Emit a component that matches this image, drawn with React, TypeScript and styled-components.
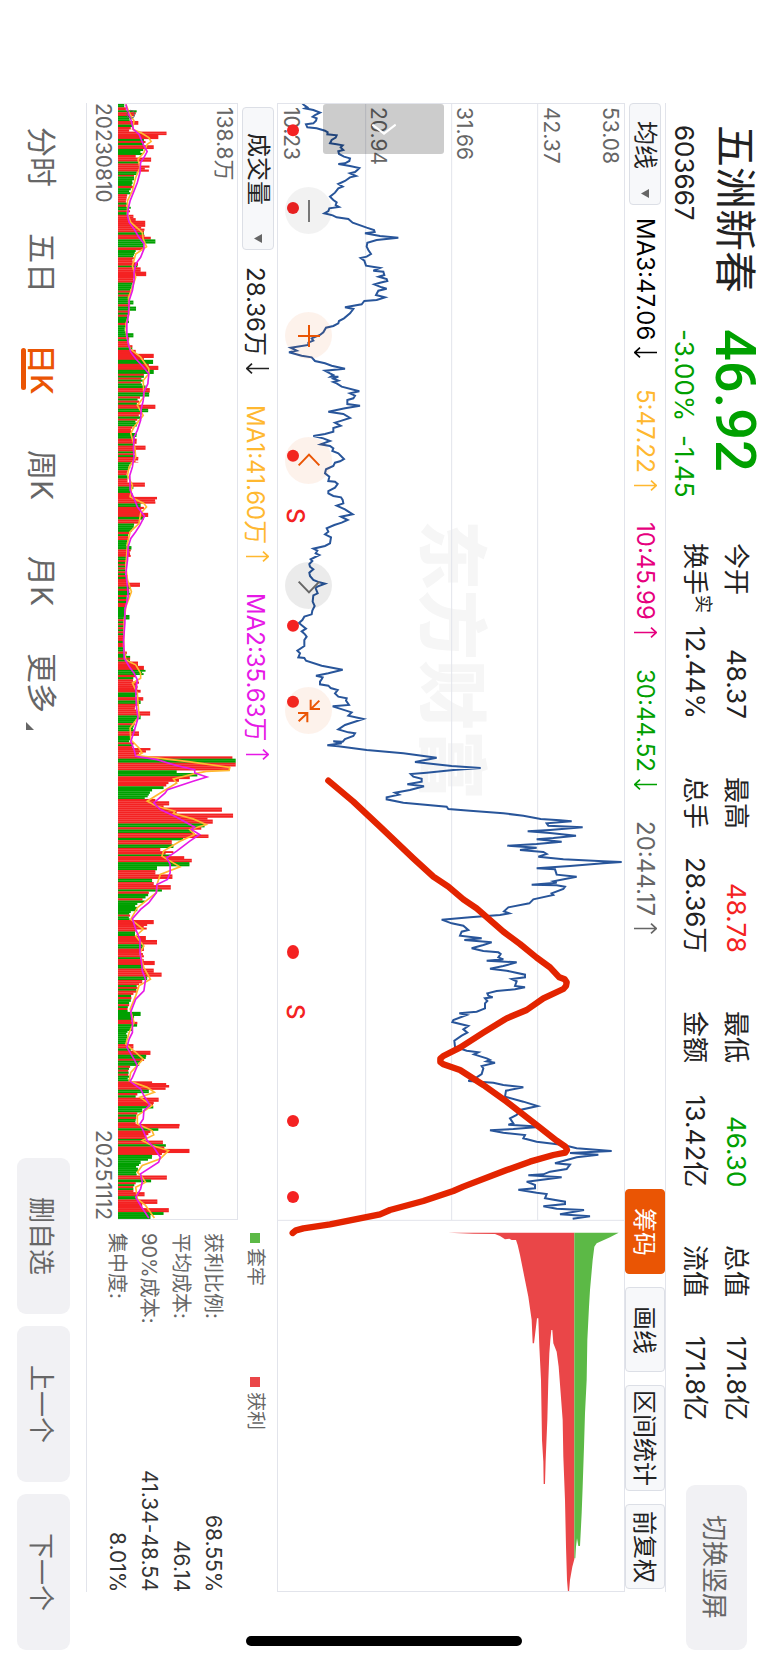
import React from "react";
import styled, { createGlobalStyle } from "styled-components";

const colors = {
  ink: "#222222",
  text: "#333333",
  muted: "#666666",
  line: "#e2e4eb",
  rise: "#f42222",
  fall: "#00a000",
  brand: "#ea5504",
  amber: "#ffb830",
  magenta: "#e619e6",
  pink: "#e6007e",
  price: "#28559a",
};

/* The whole screen is set sideways: the inline axis runs down, the block axis runs leftwards. */
const GlobalStyle = createGlobalStyle`
  * { box-sizing: border-box; }
  body {
    margin: 0;
    background: #fff;
    color: ${colors.ink};
    font-family: Inter, "Noto Sans CJK SC", sans-serif;
  }
  button, select { font: inherit; color: inherit; writing-mode: inherit; text-orientation: inherit; }
  svg { display: block; }
`;

const Screen = styled.main`
  position: relative;
  writing-mode: vertical-rl;
  text-orientation: sideways;
  display: flex;
  flex-direction: column;
  width: 100%;
  height: 100vh;
  white-space: nowrap;
`;

const Header = styled.header`
  display: flex;
  block-size: 102px;
  padding-inline: 125px 13px;
`;

const Quote = styled.section`
  display: grid;
  grid-template-columns: 204px 214px;
  grid-template-rows: 42px 32px;
  row-gap: 14px;
  padding-block-start: 12px;
  font-size: 26px;
  line-height: 32px;
`;

const Name = styled.h1`
  margin: 0;
  font-size: 42px;
  font-weight: 400;
  line-height: 42px;
`;

const Price = styled.strong`
  color: ${colors.fall};
  font-family: Roboto, sans-serif;
  font-size: 56px;
  font-weight: 500;
  line-height: 42px;
`;

const Change = styled.span`
  display: flex;
  gap: 14px;
  color: ${colors.fall};
`;

const Facts = styled.dl`
  display: grid;
  grid-template-columns: repeat(4, 176px);
  grid-template-rows: 40px 40px;
  column-gap: 58px;
  row-gap: 1px;
  margin: 0;
  padding-block-start: 12px;
  font-size: 26px;
  line-height: 40px;
`;

const Fact = styled.div`
  display: flex;
  justify-content: space-between;
`;

const Term = styled.dt`
  display: flex;
`;

const Value = styled.dd<{ $color?: string }>`
  margin: 0;
  color: ${(p) => p.$color ?? "inherit"};
`;

const Mark = styled.sup`
  font-size: 18px;
  line-height: 24px;
`;

const SoftButton = styled.button<{ $block: number; $inline: number }>`
  block-size: ${(p) => p.$block}px;
  inline-size: ${(p) => p.$inline}px;
  padding: 0;
  border: 0;
  border-radius: 9px;
  background: #f1f1f4;
  color: ${colors.muted};
  font-size: 26px;
`;

const RotateSlot = styled.div`
  margin-inline-start: auto;
  padding-block-start: 21px;
`;

const Workspace = styled.div`
  flex: 1;
  display: flex;
  flex-direction: column;
  min-block-size: 0;
  margin-inline: 103px 71px;
  border-block: 1px solid ${colors.line};
`;

const Toolbar = styled.div`
  display: flex;
  align-items: center;
  justify-content: space-between;
  block-size: 40px;
`;

const Indicators = styled.div`
  display: flex;
  align-items: center;
  gap: 31px;
  font-size: 24px;
`;

const Reading = styled.span<{ $color: string }>`
  display: flex;
  align-items: center;
  gap: 7px;
  color: ${(p) => p.$color};
`;

const PickerBox = styled.label<{ $inline: number; $pull: number }>`
  position: relative;
  inline-size: ${(p) => p.$inline}px;
  block-size: 32px;
  margin-inline-end: -${(p) => p.$pull}px;

  svg {
    position: absolute;
    inset-inline-end: 7px;
    inset-block-start: 12px;
    pointer-events: none;
  }
`;

const Picker = styled.select<{ $pad: number }>`
  appearance: none;
  inline-size: 100%;
  block-size: 100%;
  padding: 0;
  padding-inline-start: ${(p) => p.$pad}px;
  border: 1px solid #dcdfe6;
  border-radius: 4px;
  background: #f7f8fa;
  font-size: 24px;
  line-height: 30px;
`;

const Tools = styled.div`
  display: flex;
  gap: 13px;
  padding-inline-end: 3px;
`;

const Tool = styled.button<{ $wide?: boolean; $active?: boolean }>`
  block-size: 40px;
  inline-size: ${(p) => (p.$wide ? 106 : 85)}px;
  padding: 0;
  padding-block-end: 3px;
  border: 1px solid ${(p) => (p.$active ? colors.brand : "#dcdfe6")};
  border-radius: 4px;
  background: ${(p) => (p.$active ? colors.brand : "#f7f8fa")};
  color: ${(p) => (p.$active ? "#fff" : colors.ink)};
  font-size: 24px;
`;

const PriceChart = styled.section`
  position: relative;
  flex: 1;
  min-block-size: 0;
  border: 1px solid ${colors.line};
`;

const Watermark = styled.span`
  position: absolute;
  top: 28%;
  left: 40%;
  color: #f6f6f6;
  font-size: 70px;
  font-weight: 900;
  line-height: 70px;
`;

const AxisLabel = styled.span<{ $left: string }>`
  position: absolute;
  top: 3px;
  left: ${(p) => p.$left};
  color: ${colors.muted};
  font-size: 21px;
  line-height: 20px;
`;

const Plot = styled.svg`
  position: absolute;
  inset: 0;
  width: 100%;
  height: 100%;
  pointer-events: none;
`;

const Signal = styled.span<{ $top: string }>`
  position: absolute;
  top: ${(p) => p.$top};
  left: 7px;
  color: ${colors.rise};
  font-size: 24px;
  font-weight: 500;
  line-height: 20px;
`;

const Drawer = styled.button`
  position: absolute;
  top: 0;
  left: 13%;
  display: grid;
  place-items: center;
  width: 35%;
  height: 50px;
  padding: 0;
  border: 0;
  border-radius: 3px;
  background: rgba(0, 0, 0, 0.2);
  color: #fff;
`;

const Pad = styled.div`
  position: absolute;
  top: 83px;
  left: 7px;
  display: flex;
  gap: 78px;
`;

const PadButton = styled.button<{ $tone: string; $tint: string }>`
  display: grid;
  place-items: center;
  width: 47px;
  height: 47px;
  padding: 0;
  border: 0;
  border-radius: 50%;
  background: ${(p) => p.$tint};
  color: ${(p) => p.$tone};
`;

const Lower = styled.div`
  display: grid;
  grid-template-columns: 3fr 1fr;
  block-size: 190px;
`;

const VolumeArea = styled.section`
  display: flex;
  flex-direction: column;
`;

const VolumeBar = styled(Toolbar)`
  block-size: 39px;
  padding-inline-start: 4px;
`;

const VolumeFrame = styled.div`
  position: relative;
  flex: 1;
  border: solid ${colors.line};
  border-width: 1px 1px 1px 0;
`;

const Dates = styled.div`
  display: flex;
  justify-content: space-between;
  block-size: 31px;
  color: ${colors.muted};
  font-size: 21px;
  line-height: 29px;
`;

const ChipPanel = styled.aside`
  padding-inline-start: 13px;
  color: ${colors.muted};
`;

const Legend = styled.div`
  display: flex;
  block-size: 44px;
  margin-block-end: 4px;
  font-size: 19px;
  line-height: 44px;
`;

const LegendItem = styled.span<{ $color: string }>`
  display: flex;
  align-items: center;
  gap: 5px;
  inline-size: 144px;

  &::before {
    content: "";
    inline-size: 10px;
    block-size: 10px;
    background: ${(p) => p.$color};
  }
`;

const ChipList = styled.dl`
  margin: 0;
  font-size: 21px;
  line-height: 32px;

  dt {
    font-size: 20px;
  }
`;

const Footer = styled.footer`
  display: flex;
  justify-content: space-between;
  block-size: 86px;
  padding-inline: 104px 13px;
  padding-block: 16px 17px;
`;

const Tabs = styled.nav`
  display: flex;
`;

const Tab = styled.button<{ $active?: boolean; $more?: boolean }>`
  position: relative;
  inline-size: 106px;
  padding: 0;
  padding-inline-end: ${(p) => (p.$more ? 8 : 0)}px;
  border: 0;
  background: none;
  color: ${(p) => (p.$active ? colors.brand : colors.muted)};
  font-size: 30px;
  font-weight: ${(p) => (p.$active ? 500 : 400)};

  &::after {
    content: "";
    display: ${(p) => (p.$active ? "block" : "none")};
    position: absolute;
    inset-inline: 32px;
    inset-block-end: 4px;
    block-size: 5px;
    border-radius: 3px;
    background: currentColor;
  }

  svg {
    position: absolute;
    inset-inline-end: 10px;
    inset-block-end: 9px;
  }
`;

const Pager = styled.div`
  display: flex;
  gap: 12px;
`;

const HomeBar = styled.div`
  position: absolute;
  bottom: 17px;
  left: 32%;
  width: 36%;
  height: 10px;
  border-radius: 5px;
  background: #000;
`;

function Trend({ up }: { up?: boolean }) {
  return (
    <svg width="23" height="11" viewBox="0 0 23 11" fill="none" stroke="currentColor" strokeWidth="1.7" aria-hidden>
      <path d={up ? "M0 5.5H22M17 .7L22.2 5.5L17 10.3" : "M23 5.5H1M6 .7L.8 5.5L6 10.3"} />
    </svg>
  );
}

function Caret() {
  return (
    <svg width="8" height="9" viewBox="0 0 8 9" fill={colors.muted} aria-hidden>
      <path d="M0 4.5L8 0V9Z" />
    </svg>
  );
}

function Glyph({ d }: { d: string }) {
  return (
    <svg width="24" height="24" viewBox="-36 -36 72 72" fill="none" stroke="currentColor" strokeWidth="6" aria-hidden>
      <path d={d} />
    </svg>
  );
}

/* Traced series: each piece holds "x,y" pairs and is shifted down by its own offset. */
type Piece = [number, string];

const join = (pieces: Piece[]) =>
  pieces
    .map(([dy, pts]) =>
      pts
        .split(" ")
        .map((p) => {
          const [x, y] = p.split(",").map(Number);
          return `${x},${y + dy}`;
        })
        .join(" "),
    )
    .join(" ");

const closeLine = join([
  [0, "95,38 102,45 112,52 105,55 130,60 150,68 135,75 128,80 140,85 138,92 130,100 108,103 112,112 140,115 165,122 173,127 172,133 200,136 197,143 185,150 180,160 200,163 218,166 212,172 220,180 205,184 207,192 222,200 240,205 238,213 225,220 205,222 240,228 268,234 262,240 255,246 240,250 258,258 240,262 225,273 205,282 218,290 205,295 195,308 180,320 190,330 200,337 197,345 207,351 178,355 175,363 163,370 188,376 200,382 235,387 248,398 290,413 312,420 314,426 285,430 330,438 385,443 320,450 292,458 290,470 295,480 303,492 290,500 272,504 283,512 288,527 330,534 310,542 340,545 343,555 326,560 350,567 352,573 330,578 313,583 335,592 350,596 325,602 318,615 345,622 320,630 283,633 275,643 225,652 250,657 240,670 222,685 207,693 205,700 190,708 168,713 160,727 150,735 125,745 130,752 115,758 115,765 62,773 80,782 57,787 95,797 125,802 135,813 165,820 185,827 225,836 165,842 180,850 190,855 182,860 205,860 190,866 205,872 190,876 200,880 215,890 268,904 240,910 255,917 250,925 232,930 232,942 270,947 225,955 175,965 220,972 240,984 215,992"],
  [990, "195,8 212,17 190,24 190,35 165,42 130,48 160,55 180,63 152,73 180,78 190,85 187,93 205,100 222,117 210,124 195,128 190,138 168,148 165,160 178,170 175,183 195,185 203,192 195,203 175,213 175,220 190,228 213,232 218,240 220,250 200,257 225,268 248,283 213,290 233,300 215,308 193,315 170,325 175,335 165,343 183,352 180,370 165,378 130,386 142,392 137,400 148,405 122,418 127,423 118,432 120,440 130,448 118,458 120,468 130,480 148,487 165,491 142,500 137,505 143,520 130,526 128,545 134,558 127,572 125,583 103,590 97,600 87,609 97,617 108,626 95,634 105,643 110,650 103,660 103,678 82,692 90,700 85,712 103,714 108,722 155,737 218,749 175,760 138,767 158,772 155,778 150,785 150,793 175,797 182,804 203,810 195,820 205,830 230,835 228,842 237,855 188,859 245,877 235,887 280,897 225,915 205,928 235,937 255,940 250,948 225,957 218,965 190,964 215,970 172,976 205,979 290,990 400,1000 500,1013"],
  [1980, "435,36 545,48 632,54 550,60 470,68 422,72 430,80 455,86 455,95 412,103 462,109 420,120 375,128 387,134 350,142 350,148 400,158 530,170 535,177 600,182 700,190 760,197 812,207 870,211 905,214 830,220 835,227 938,232 840,240 773,244 840,249 918,257 850,264 800,268 875,275 800,282 712,287 800,293 750,300 820,306 830,312 805,320 880,328 1000,334 1055,336 1000,340 900,348 800,355 855,358 860,374 920,380 850,394 860,398 785,404 860,406 885,410 880,417 845,430 850,435 790,448 778,460 715,472 702,484 718,490 690,495 600,502 515,509 545,520 580,527 595,540 575,545 570,557 635,565 583,570 665,577 640,585 605,595 640,603 685,607 692,612 685,622 700,628 650,632 740,637 700,648 660,656 710,662 765,674 765,682 725,687 740,694 735,708 765,712 735,718 680,723 652,730 655,737 668,742 645,745"],
  [2730, "652,3 645,10 645,25 620,35 568,40 590,45 550,60 547,66 595,78 580,88 592,98 575,107 553,122 555,140 590,152 625,157 612,163 650,175 660,180 650,184 675,188 635,198 640,205 635,222 620,232 595,243 670,248 700,255 760,262 708,272 705,290 760,305 803,318 750,330 740,345 720,355 730,370 715,374 815,380 730,387 660,391 700,398 765,405 760,415 800,425 880,435 920,445 1025,453 900,459 985,464 920,472 855,490 900,494 890,507 840,515 820,523 775,526 875,532 770,545 795,555 795,565 745,569 800,578 830,582 825,595 885,605 885,612 820,619 860,626 942,630 870,643 960,649 908,656"],
]);

const sketchLine = join([
  [1980, "175,92 250,155 330,230 430,325 490,380 535,410 580,448 620,475 700,545 750,582 800,623 840,652 868,682 884,688 890,697 888,708 880,717 820,745"],
  [2730, "770,30 710,55 640,98 570,143 520,168 511,176 511,186 520,193 570,210 640,255 710,305 800,375 860,422 886,440 891,450 886,458 850,465 780,485 710,510 580,560 550,573 460,603 360,630 330,643 180,673 100,685 78,691 68,699"],
]);

const amberLine = join([
  [0, "135,40 145,65 160,90 155,115 180,125 205,140 212,152 200,160 190,185 172,205 178,230 165,260 155,300 140,330 140,370 150,395 185,425 188,445 198,468 165,490 155,525 165,560 155,590 143,620 145,670 135,700 137,735 148,775 180,800 205,835 205,850 188,870 190,920 170,945 188,975 160,1010 150,1030 162,1070 165,1100"],
  [1110, "160,0 145,20 140,45 155,75 148,110 190,130 198,140 180,160 175,190 148,215 140,250 135,320 140,360 152,395 135,440 130,480 128,560 135,600 165,615 180,640 180,655 155,670 170,700 175,770 148,805 150,840 175,865 185,880 170,888 320,905 452,923 450,932 380,935 345,942 280,958 290,970 240,1000 200,1025 230,1040 285,1055 280,1062 340,1078 380,1095"],
  [2220, "330,0 345,15 300,35 250,65 245,80 300,112 240,135 230,165 228,190 170,235 150,270 188,300 165,320 190,350 178,370 190,415 210,450 175,470 165,500 148,540 160,580 145,610 135,645 165,670 188,690 150,730 145,755 200,775 222,790 178,805 215,830 170,860 170,885 215,905 220,918 185,935 215,950 265,965 240,990 185,1010 170,1030 185,1045 195,1060 165,1075 170,1110 195,1130 222,1168"],
]);

const magentaLine = join([
  [0, "135,40 140,60 150,85 158,115 175,130 190,165 200,182 190,200 180,215 178,245 170,275 160,300 148,330 142,355 140,375 145,395 160,415 175,440 190,458 190,475 180,500 165,520 160,545 160,570 155,600 145,630 143,670 138,700 138,730 142,760 150,785 165,805 190,832 205,850 202,880 190,905 188,930 182,955 180,990 170,1020 160,1040 158,1075 160,1100"],
  [1110, "158,0 155,20 147,45 148,90 160,115 170,140 192,168 178,195 165,215 150,235 142,260 140,300 135,340 140,380 142,410 132,450 132,490 128,540 130,595 145,620 160,640 170,660 165,690 167,740 172,775 160,815 150,845 160,870 165,890 230,900 290,918 345,930 345,940 382,952 340,965 262,990 255,1000 220,1030 240,1050 290,1073 345,1103"],
  [2220, "335,0 360,15 330,35 290,65 260,85 270,105 270,130 262,150 230,165 228,190 205,220 180,240 155,268 165,300 178,330 178,370 183,400 185,425 195,450 190,485 165,510 150,548 155,580 155,610 145,630 138,655 160,690 170,710 155,745 148,757 180,780 190,800 208,828 190,845 188,870 178,885 190,910 200,935 220,955 240,985 235,1000 180,1035 185,1060 180,1080 165,1105 180,1130 205,1168"],
]);

/* Volume runs as "end,reach,kind": R rising, G falling, M mixed days. */
const volumeRuns: Piece[] = [
  [0, "49,130,G 58,135,R 75,168,R 90,150,G 101,173,R 108,155,G 122,150,R 132,259,R 144,234,R 150,190,G 156,195,R 163,190,G 174,220,R 192,188,G 200,165,R 212,212,R 218,175,G 224,180,R 242,207,R 252,168,G 262,160,M 285,160,G 292,158,R 310,150,G 348,139,R 364,150,G 372,138,G 382,158,R 390,165,R 402,194,R 425,194,R 432,190,G 438,192,R 446,211,R 458,225,G 470,190,G 478,190,R 500,165,G 515,160,R 525,172,R 530,170,G 543,180,R 556,197,R 576,165,R 600,155,G 618,150,M 630,145,G 641,158,G 648,148,R 660,166,G 697,145,G 704,135,R 728,135,G 740,158,G 752,145,M 764,143,R 778,155,G 790,165,R 802,220,R 808,190,R 820,218,G 826,205,R 838,234,R 850,220,G 885,190,M 893,195,G 906,208,R 918,206,G 943,178,M 955,225,R 965,203,G 985,185,R 1008,170,G 1028,155,R 1045,168,G 1060,168,R 1066,160,G 1078,195,R 1100,165,M 1115,173,R"],
  [1110, "6,173,R 30,150,G 45,140,R 55,140,G 67,140,R 79,193,R 98,158,G 110,155,R 124,230,R 130,225,R 140,180,G 158,190,R 170,203,R 178,190,G 190,175,R 215,160,G 222,145,R 228,142,G 240,142,R 258,140,G 268,152,G 290,150,R 300,140,G 345,135,M 368,140,R 380,178,R 405,150,G 435,138,M 465,135,G 478,146,G 520,132,M 555,130,R 575,130,G 588,138,R 605,148,G 618,172,R 630,190,R 645,195,G 665,165,M 690,175,R 698,180,R 712,170,G 722,188,R 732,180,G 755,172,R 767,209,R 778,180,G 815,165,G 828,175,R 848,150,G 865,160,M 878,210,R 890,175,R 897,460,R 909,470,G 920,470,R 932,452,R 940,290,G 950,353,G 958,330,R 966,297,R 980,265,R 988,250,G 1002,215,G 1018,205,G 1025,225,R 1037,267,R 1044,250,R 1056,428,R 1062,290,R 1074,462,R 1080,384,R 1092,400,R 1103,375,G 1110,365,R"],
  [2220, "10,340,G 15,345,R 25,387,R 32,310,G 45,275,R 55,280,G 65,240,R 80,280,R 88,313,R 98,336,R 110,329,G 122,230,G 135,225,R 148,277,R 158,215,G 167,220,R 180,272,R 186,245,G 200,205,R 220,195,G 245,170,G 272,150,G 284,220,R 300,200,R 320,165,G 332,196,R 345,230,R 358,190,G 378,190,R 395,190,M 407,223,R 418,188,G 430,220,R 442,244,R 452,200,G 462,185,R 490,175,M 510,158,R 525,150,G 548,145,M 560,180,G 578,160,G 592,170,R 605,155,G 645,140,G 658,158,R 665,150,G 677,210,R 695,197,R 710,180,G 740,148,M 757,145,G 762,215,R 768,258,R 782,267,R 792,205,G 806,170,M 818,235,R 838,220,R 850,185,G 870,170,M 885,165,G 898,299,R 905,234,G 925,210,R 935,195,M 946,248,R 960,257,R 972,329,R 978,245,R 995,215,G 1005,180,G 1040,175,G 1052,260,R 1060,212,G 1090,165,M 1102,192,R 1112,170,G 1125,231,R 1138,185,R 1150,266,R 1158,250,G 1170,210,G"],
];

type Bar = { y: number; h: number; reach: number; color: string };

function buildBars(): Bar[] {
  const bars: Bar[] = [];
  let y = 39;
  let seed = 7;
  const random = () => {
    seed = (seed * 16807) % 2147483647;
    return seed / 2147483647;
  };
  for (const [dy, runs] of volumeRuns) {
    for (const run of runs.split(" ")) {
      const [end, reach, kind] = run.split(",");
      const stop = Number(end) + dy;
      const long = stop - y > 13;
      const count = Math.max(1, Math.round((stop - y) / 6));
      const step = (stop - y) / count;
      for (let i = 0; i < count; i++) {
        const flip = kind === "M" ? i % 2 === 1 : long && random() < 0.13;
        const rising = (kind !== "G") !== flip;
        const dip = long && i > 0 ? random() * 0.16 : 0;
        bars.push({
          y,
          h: step,
          reach: (Number(reach) - 111) * (1 - dip),
          color: rising ? colors.rise : colors.fall,
        });
        y += step;
      }
    }
  }
  return bars;
}

const bars = buildBars();

const dots = [121, 354, 1097, 1607, 1835, 2586, 3093, 3321];

const axis = [
  { text: "53.08", left: "93%" },
  { text: "42.37", left: "76%" },
  { text: "31.66", left: "51%" },
  { text: "20.94", left: "26%" },
  { text: "10.23", left: "1%" },
];

const readings = [
  { text: "MA3:47.06", color: "#000000", up: false },
  { text: "5:47.22", color: colors.amber, up: true },
  { text: "10:45.99", color: colors.pink, up: true },
  { text: "30:44.52", color: colors.fall, up: false },
  { text: "20:44.17", color: colors.muted, up: true },
];

const facts = [
  { term: "今开", value: "48.37" },
  { term: "最高", value: "48.78", color: colors.rise },
  { term: "最低", value: "46.30", color: colors.fall },
  { term: "总值", value: "171.8亿" },
  { term: "换手", value: "12.44%", mark: "实" },
  { term: "总手", value: "28.36万" },
  { term: "金额", value: "13.42亿" },
  { term: "流值", value: "171.8亿" },
];

const chips = [
  { term: "获利比例:", value: "68.55%" },
  { term: "平均成本:", value: "46.14" },
  { term: "90%成本:", value: "41.34-48.54" },
  { term: "集中度:", value: "8.01%" },
];

const grayTint = "rgba(0, 0, 0, 0.05)";
const grayDark = "rgba(0, 0, 0, 0.08)";
const warmTint = "rgba(234, 85, 4, 0.08)";

const padButtons = [
  { label: "缩小", d: "M0-33V33", tone: "#777777", tint: grayTint },
  { label: "放大", d: "M0-33V33M-33 0H33", tone: colors.brand, tint: warmTint },
  { label: "左移", d: "M-31 13L0-19L31 13", tone: colors.brand, tint: warmTint },
  { label: "右移", d: "M-31-13L0 19L31-13", tone: colors.muted, tint: grayDark },
  { label: "收起", d: "M5-34V-6H33M31-31L7-7M-33 6H-5V34M-31 31L-7 8", tone: colors.brand, tint: warmTint },
];

const tabs = ["分时", "五日", "日K", "周K", "月K", "更多"];

export default function App() {
  return (
    <>
      <GlobalStyle />
      <Screen>
        <Header>
          <Quote>
            <Name>五洲新春</Name>
            <Price>46.92</Price>
            <span>603667</span>
            <Change>
              <span>-3.00%</span>
              <span>-1.45</span>
            </Change>
          </Quote>
          <Facts>
            {facts.map((f) => (
              <Fact key={f.term}>
                <Term>
                  {f.term}
                  {f.mark && <Mark>{f.mark}</Mark>}
                </Term>
                <Value $color={f.color}>{f.value}</Value>
              </Fact>
            ))}
          </Facts>
          <RotateSlot>
            <SoftButton type="button" $block={61} $inline={165}>切换竖屏</SoftButton>
          </RotateSlot>
        </Header>

        <Workspace>
          <Toolbar>
            <Indicators>
              <PickerBox $inline={102} $pull={18}>
                <Picker $pad={17} aria-label="主图指标">
                  <option>均线</option>
                </Picker>
                <Caret />
              </PickerBox>
              {readings.map((r) => (
                <Reading key={r.text} $color={r.color}>
                  {r.text}
                  <Trend up={r.up} />
                </Reading>
              ))}
            </Indicators>
            <Tools>
              <Tool type="button" $active>筹码</Tool>
              <Tool type="button">画线</Tool>
              <Tool type="button" $wide>区间统计</Tool>
              <Tool type="button">前复权</Tool>
            </Tools>
          </Toolbar>

          <PriceChart>
            <Watermark>东方财富</Watermark>
            <Plot viewBox="24 42 1038 4461" preserveAspectRatio="none">
              <path d="M287 39V3390M545 39V3390M803 39V3390M21 3391H1065" stroke={colors.line} strokeWidth="3" />
            </Plot>
            {axis.map((a) => (
              <AxisLabel key={a.text} $left={a.left}>{a.text}</AxisLabel>
            ))}
            <Plot viewBox="24 42 1038 4461" preserveAspectRatio="none">
              <g transform="translate(480 3270)">
                <path fill="#ea4648" d="M55 158H433V1138L427 1160L420 1200L417 1237H414L411 1200L408 1100L405 960L400 830L398 720L392 640L386 560L380 515L370 490L367 450H364L361 480L358 520L355 600L352 720L347 840L345 912H341L340 845L336 780L333 600L328 500L325 415H321L318 440L312 490H308L305 420L295 350L283 290L270 225L263 195L258 180H245L238 176L225 178L210 168L195 162L130 161Z" />
                <path fill="#5cb946" d="M433 158H566L540 172L500 190L493 200L488 240L480 330L477 380L472 480L470 600L465 700L462 800L458 920L455 1000L452 1060L450 1098H445L441 1075L438 1100L436 1135H433Z" />
              </g>
              <polyline points={closeLine} fill="none" stroke={colors.price} strokeWidth="6" strokeLinejoin="miter" />
              <polyline points={sketchLine} fill="none" stroke="#e32400" strokeWidth="19" strokeLinejoin="round" strokeLinecap="round" />
              {dots.map((y) => (
                <ellipse key={y} cx="69" cy={y} rx="18" ry={y === 2586 ? 21 : 18} fill={colors.rise} />
              ))}
            </Plot>
            <Signal $top="27.2%">S</Signal>
            <Signal $top="60.5%">S</Signal>
            <Pad>
              {padButtons.map((b) => (
                <PadButton key={b.label} type="button" aria-label={b.label} $tone={b.tone} $tint={b.tint}>
                  <Glyph d={b.d} />
                </PadButton>
              ))}
            </Pad>
            <Drawer type="button" aria-label="展开">
              <Glyph d="M-35-13L0 14L35-13" />
            </Drawer>
          </PriceChart>

          <Lower>
            <VolumeArea>
              <VolumeBar>
                <Indicators>
                  <PickerBox $inline={143} $pull={14}>
                    <Picker $pad={25} aria-label="副图指标">
                      <option>成交量</option>
                    </Picker>
                    <Caret />
                  </PickerBox>
                  <Reading $color={colors.ink}>28.36万<Trend /></Reading>
                  <Reading $color={colors.amber}>MA1:41.60万<Trend up /></Reading>
                  <Reading $color={colors.magenta}>MA2:35.63万<Trend up /></Reading>
                </Indicators>
              </VolumeBar>
              <VolumeFrame>
                <Plot viewBox="111 39 363 3351" preserveAspectRatio="none">
                  {bars.map((b) => (
                    <rect key={b.y} x="111" y={b.y} width={b.reach} height={b.h + 0.5} fill={b.color} />
                  ))}
                  <polyline points={amberLine} fill="none" stroke={colors.amber} strokeWidth="5" />
                  <polyline points={magentaLine} fill="none" stroke={colors.magenta} strokeWidth="5" />
                  <circle cx="150" cy="70" r="12" fill="none" stroke={colors.muted} strokeWidth="3" />
                </Plot>
                <AxisLabel $left="81%">138.8万</AxisLabel>
              </VolumeFrame>
              <Dates>
                <span>20230810</span>
                <span>20251112</span>
              </Dates>
            </VolumeArea>
            <ChipPanel>
              <Legend>
                <LegendItem $color="#5cb946">套牢</LegendItem>
                <LegendItem $color="#ea4648">获利</LegendItem>
              </Legend>
              <ChipList>
                {chips.map((c) => (
                  <Fact key={c.term}>
                    <dt>{c.term}</dt>
                    <Value $color={colors.text}>{c.value}</Value>
                  </Fact>
                ))}
              </ChipList>
            </ChipPanel>
          </Lower>
        </Workspace>

        <Footer>
          <Tabs>
            {tabs.map((t) => (
              <Tab key={t} type="button" $active={t === "日K"} $more={t === "更多"}>
                {t}
                {t === "更多" && (
                  <svg width="8" height="8" viewBox="0 0 8 8" fill={colors.muted} aria-hidden>
                    <path d="M0 8H8L0 0Z" />
                  </svg>
                )}
              </Tab>
            ))}
          </Tabs>
          <Pager>
            <SoftButton type="button" $block={53} $inline={156}>删自选</SoftButton>
            <SoftButton type="button" $block={53} $inline={156}>上一个</SoftButton>
            <SoftButton type="button" $block={53} $inline={156}>下一个</SoftButton>
          </Pager>
        </Footer>
        <HomeBar />
      </Screen>
    </>
  );
}
